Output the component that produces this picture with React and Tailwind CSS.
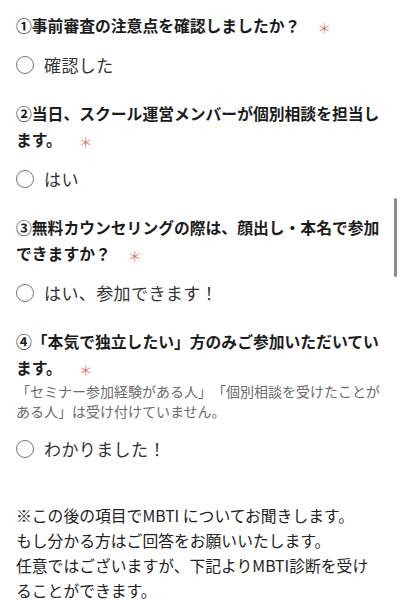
const font = { fontFamily: '"Noto Sans CJK JP", "Noto Sans", sans-serif' }

function Question({ children, desc, option, first }) {
  return (
    <div className={first ? '' : 'mt-[24px]'}>
      <p className="text-[15.8px] leading-[26px] font-bold text-[#1c1c1c] [text-spacing-trim:space-all]">
        {children}
        <span className="inline-block align-top h-[26px] ml-[17px] text-[14px] leading-[26px] font-light text-[#e0604f] translate-y-[1px]">＊</span>
      </p>
      {desc && (
        <p className="text-[14px] leading-[20px] text-[#6b6b6b] [text-spacing-trim:space-all]">{desc}</p>
      )}
      <label className={`flex items-center h-6 ${desc ? 'mt-[16px]' : 'mt-[14px]'}`}>
        <span className="w-[18px] h-[18px] rounded-full border-[1.5px] border-[#767676] bg-white shrink-0" />
        <span className="ml-[10px] text-[17px] leading-6 tracking-[0.4px] text-[#333]">{option}</span>
      </label>
    </div>
  )
}

export default function App() {
  return (
    <div style={font} className="relative w-[401px] h-[600px] overflow-hidden bg-white pl-4 pr-[17px] pt-[13px]">
      <Question first option="確認した">①事前審査の注意点を確認しましたか？</Question>
      <Question option="はい">②当日、スクール運営メンバーが個別相談を担当します。</Question>
      <Question option="はい、参加できます！">③無料カウンセリングの際は、顔出し・本名で参加できますか？</Question>
      <Question
        option="わかりました！"
        desc="「セミナー参加経験がある人」「個別相談を受けたことがある人」は受け付けていません。"
      >
        ④「本気で独立したい」方のみご参加いただいています。
      </Question>
      <p className="mt-[42px] text-[15.8px] leading-[25px] text-[#222] whitespace-nowrap">
        ※この後の項目でMBTI についてお聞きします。<br />
        もし分かる方はご回答をお願いいたします。<br />
        任意ではございますが、下記よりMBTI診断を受け<br />
        ることができます。
      </p>
      <div className="absolute left-[394px] top-[198px] w-[3px] h-[79px] rounded-full bg-[#8c8c8c]" />
    </div>
  )
}
